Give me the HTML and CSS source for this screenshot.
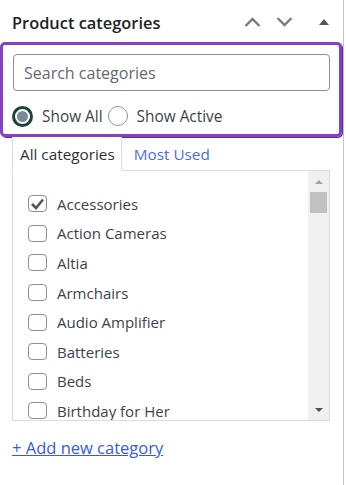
FILE: index.html
```html
<html>
<head>
    <title>Product categories</title>
    <link rel="stylesheet" href="styles.css">
</head>

<body>
    <div class="postbox">
        <div class="postbox-header">
            <h2 class="hndle">Product categories</h2>
            <div class="handle-actions">
                <button class="handle-btn">
                    <svg width="17" height="10" viewBox="0 0 17 10"><polyline points="1.5,9 8.5,2 15.5,9" fill="none" stroke="#787c82" stroke-width="2.4"/></svg>
                </button>
                <button class="handle-btn">
                    <svg width="17" height="10" viewBox="0 0 17 10"><polyline points="1.5,1 8.5,8 15.5,1" fill="none" stroke="#787c82" stroke-width="2.4"/></svg>
                </button>
                <button class="handle-btn toggle">
                    <svg width="10" height="6" viewBox="0 0 10 6"><polygon points="0,6 5,0 10,6" fill="#50575e"/></svg>
                </button>
            </div>
        </div>

        <div class="inside">
            <!-- search + show filter -->
            <div class="cat-filter">
                <input class="cat-search" type="text" placeholder="Search categories">
                <div class="cat-show">
                    <label class="radio-opt"><span class="radio is-checked"></span>Show All</label>
                    <label class="radio-opt"><span class="radio"></span>Show Active</label>
                </div>
            </div>

            <ul class="category-tabs">
                <li class="tabs">All categories</li>
                <li><a href="#">Most Used</a></li>
            </ul>

            <div class="tabs-panel">
                <ul class="cat-list">
                    <li><span class="cb is-checked"><svg width="15" height="12" viewBox="0 0 15 12"><polyline points="2,6 6,10 13,1.5" fill="none" stroke="#50575e" stroke-width="2.6"/></svg></span>Accessories</li>
                    <li><span class="cb"></span>Action Cameras</li>
                    <li><span class="cb"></span>Altia</li>
                    <li><span class="cb"></span>Armchairs</li>
                    <li><span class="cb"></span>Audio Amplifier</li>
                    <li><span class="cb"></span>Batteries</li>
                    <li><span class="cb"></span>Beds</li>
                    <li><span class="cb"></span>Birthday for Her</li>
                </ul>
                <div class="fake-scroll">
                    <div class="scroll-btn"><span class="arrow-up"></span></div>
                    <div class="scroll-thumb"></div>
                    <div class="scroll-track"></div>
                    <div class="scroll-btn"><span class="arrow-down"></span></div>
                </div>
            </div>

            <a class="add-new" href="#">+ Add new category</a>
        </div>
    </div>
</body>
</html>
```

FILE: styles.css
```css
body {
    margin: 0;
    background: #fff;
    font-family: "Open Sans", "Noto Sans", sans-serif;
    color: #3c434a;
}

.postbox {
    width: 343px;
    height: 485px;
    border-right: 1px solid #c3c4c7;
    box-sizing: content-box;
}

.postbox-header {
    height: 42px;
    display: flex;
    align-items: center;
    justify-content: space-between;
}

.hndle {
    margin: 0;
    padding: 2px 0 0 12px;
    font-size: 16.4px;
    font-weight: 600;
    color: #1d2327;
}

.handle-actions {
    display: flex;
    align-items: center;
    padding-top: 2px;
    padding-right: 14px;
}

.handle-btn {
    border: none;
    background: none;
    padding: 0;
    margin-left: 15px;
    width: 17px;
    height: 20px;
    display: flex;
    align-items: center;
    justify-content: center;
}

.handle-btn.toggle {
    margin-left: 26px;
    width: 10px;
}

/* purple filter block */
.cat-filter {
    width: 342px;
    box-sizing: border-box;
    border: 3px solid #8540c5;
    border-radius: 5px;
    box-shadow: 1px 1px 0 #5f2a95;
    padding: 9px 9px 3px 10px;
}

.cat-search {
    display: block;
    width: 317px;
    height: 37px;
    box-sizing: border-box;
    border: 1px solid #8c8f94;
    border-radius: 4px;
    padding: 0 10px;
    font-family: "Open Sans", "Noto Sans", sans-serif;
    font-size: 16px;
    color: #2c3338;
    outline: none;
}

.cat-search::placeholder {
    color: #646970;
}

.cat-show {
    margin-top: 10px;
    height: 30px;
    display: flex;
    align-items: center;
    margin-left: -1px;
}

.radio-opt {
    display: flex;
    align-items: center;
    font-size: 15.4px;
    color: #3c434a;
}

.radio {
    width: 20px;
    height: 20px;
    box-sizing: border-box;
    border: 1px solid #8c8f94;
    border-radius: 50%;
    margin-right: 9px;
    background: #fff;
    position: relative;
}

.radio.is-checked {
    width: 21px;
    height: 21px;
    border: 3px solid #1b4536;
}

.radio.is-checked::after {
    content: "";
    position: absolute;
    left: 2px;
    top: 2px;
    width: 11px;
    height: 11px;
    border-radius: 50%;
    background: #7e8993;
}

.radio-opt + .radio-opt .radio {
    margin-left: 5px;
}

/* tabs */
.category-tabs {
    list-style: none;
    margin: 0 0 -1px 12px;
    padding: 0;
    display: flex;
    height: 34px;
    position: relative;
}

.category-tabs li {
    display: flex;
    align-items: center;
    font-size: 15.3px;
}

.category-tabs .tabs {
    padding: 0 6px 0 7px;
    border: 1px solid #dcdcde;
    border-top: none;
    border-bottom: 1px solid #fff;
    background: #fff;
    color: #2c3338;
}

.category-tabs a {
    margin-left: 12px;
    color: #4a6ee0;
    text-decoration: none;
}

.tabs-panel {
    margin-left: 12px;
    width: 318px;
    height: 251px;
    box-sizing: border-box;
    border: 1px solid #dcdcde;
    display: flex;
}

.cat-list {
    list-style: none;
    margin: 0;
    padding: 18px 0 0 15px;
    flex: 1;
    overflow: hidden;
}

.cat-list li {
    height: 29.6px;
    display: flex;
    align-items: center;
    font-size: 15px;
    color: #3c434a;
    white-space: nowrap;
}

.cb {
    width: 19px;
    height: 17px;
    box-sizing: border-box;
    border: 1px solid #8c8f94;
    border-radius: 4px;
    margin-right: 10px;
    display: flex;
    align-items: center;
    justify-content: center;
    flex-shrink: 0;
}

/* scrollbar look-alike */
.fake-scroll {
    width: 21px;
    background: #f0f0f0;
    display: flex;
    flex-direction: column;
}

.scroll-btn {
    height: 21px;
    display: flex;
    align-items: center;
    justify-content: center;
}

.arrow-up {
    width: 0;
    height: 0;
    border-left: 4px solid transparent;
    border-right: 4px solid transparent;
    border-bottom: 4px solid #a3a3a3;
}

.arrow-down {
    width: 0;
    height: 0;
    border-left: 4px solid transparent;
    border-right: 4px solid transparent;
    border-top: 4px solid #505050;
}

.scroll-thumb {
    height: 21px;
    margin: 0 2px;
    background: #c1c1c1;
}

.scroll-track {
    flex: 1;
}

.add-new {
    display: inline-block;
    margin: 15px 0 0 12px;
    font-size: 16.5px;
    font-weight: 500;
    color: #3858e9;
    text-decoration: underline;
}
```
